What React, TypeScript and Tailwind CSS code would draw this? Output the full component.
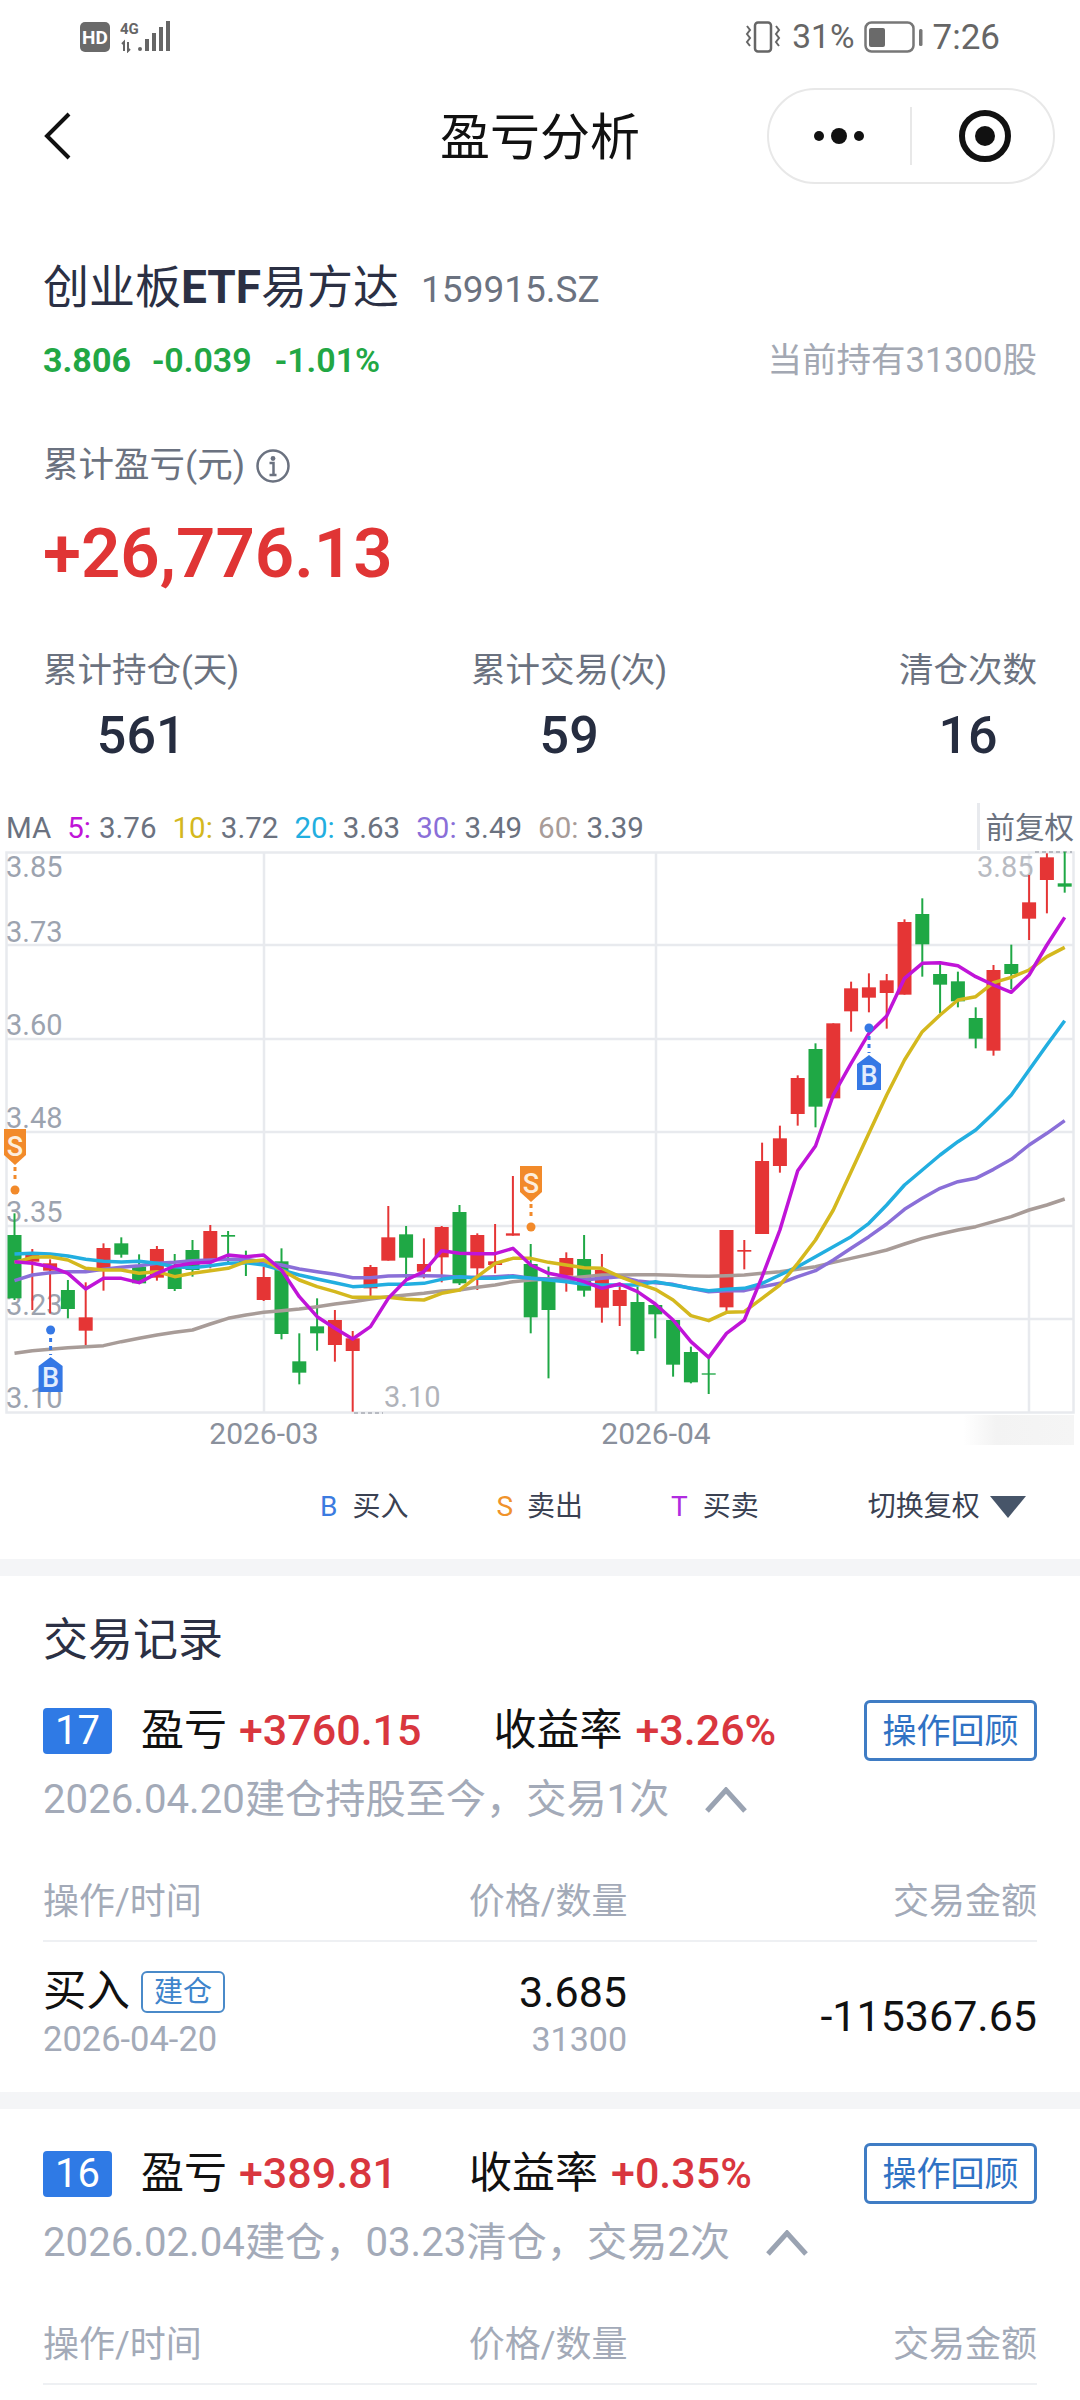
// 盈亏分析 page: header, k-line chart and trade records

// [isRed, bodyTop, bodyBottom, wickTop, wickBottom], y values relative to chart row (see toY)
const candles: [number, number, number, number, number][] = [
  [0, 405, 595, 340, 600], [1, 465, 485, 447, 630], [1, 490, 512, 478, 640], [0, 570, 627, 540, 655],
  [1, 652, 692, 547, 738], [1, 444, 505, 430, 572], [0, 430, 464, 412, 473], [0, 500, 550, 463, 552],
  [1, 447, 533, 438, 542], [0, 500, 567, 462, 573], [0, 450, 510, 420, 530], [1, 393, 480, 375, 505],
  [0, 405, 410, 393, 490], [0, 480, 486, 452, 528], [1, 531, 600, 500, 603], [0, 484, 702, 445, 718],
  [0, 784, 818, 700, 853], [0, 679, 700, 595, 752], [1, 660, 735, 630, 785], [1, 715, 753, 693, 935],
  [1, 501, 565, 495, 590], [1, 412, 482, 318, 482], [0, 403, 473, 378, 540], [1, 492, 515, 415, 535],
  [1, 381, 472, 378, 547], [0, 336, 550, 315, 555], [1, 405, 505, 400, 570], [1, 484, 495, 372, 520],
  [1, 400, 407, 228, 407], [0, 492, 652, 432, 700], [0, 540, 630, 500, 835], [1, 474, 527, 457, 575],
  [0, 477, 572, 405, 590], [1, 510, 623, 462, 668], [1, 570, 618, 548, 678], [0, 606, 753, 560, 763],
  [0, 615, 643, 615, 715], [0, 660, 794, 660, 830], [0, 756, 847, 740, 850], [0, 820, 824, 770, 882],
  [1, 390, 622, 390, 635], [1, 450, 455, 420, 508], [1, 183, 402, 128, 402], [1, 115, 198, 77, 218],
  [1, -66, 42, -74, 77], [0, -153, 20, -170, 82], [1, -230, -5, -230, -5], [1, -335, -266, -355, -205],
  [1, -338, -307, -380, -263], [1, -359, -321, -378, -214], [1, -534, -316, -542, -316], [0, -558, -467, -605, -370],
  [0, -378, -346, -410, -260], [0, -356, -296, -385, -278], [0, -246, -184, -278, -155], [1, -390, -148, -405, -133],
  [0, -408, -378, -466, -332], [1, -593, -544, -675, -480], [1, -728, -660, -740, -560], [0, -650, -640, -745, -622],
];

const ma5 = [485, 490, 500, 520, 567, 535, 535, 548, 520, 498, 490, 487, 465, 470, 465, 510, 590, 650, 685, 717, 680, 595, 540, 515, 452, 460, 461, 461, 445, 495, 520, 530, 545, 565, 552, 575, 612, 660, 725, 772, 700, 660, 530, 390, 212, 138, -15, -110, -200, -252, -365, -410, -412, -403, -370, -345, -323, -375, -465, -548];
const ma10 = [487, 472, 470, 480, 505, 510, 510, 520, 515, 530, 520, 512, 505, 485, 480, 510, 540, 560, 575, 592, 592, 592, 598, 600, 580, 570, 530, 490, 475, 475, 487, 495, 503, 505, 530, 550, 568, 600, 647, 662, 637, 635, 595, 555, 490, 420, 330, 215, 100, -15, -120, -205, -255, -300, -310, -352, -368, -390, -430, -458];
const ma20 = [462, 460, 462, 468, 478, 484, 486, 484, 490, 500, 503, 497, 490, 488, 495, 510, 525, 537, 548, 560, 557, 553, 553, 550, 538, 530, 535, 535, 530, 535, 540, 545, 553, 555, 555, 555, 545, 555, 565, 572, 568, 565, 550, 525, 500, 470, 440, 410, 370, 315, 255, 210, 165, 125, 90, 40, -15, -90, -165, -238];
const ma30 = [542, 525, 518, 515, 515, 508, 502, 497, 490, 487, 482, 480, 478, 478, 485, 495, 507, 515, 523, 533, 533, 528, 527, 527, 528, 532, 532, 530, 527, 535, 537, 537, 540, 535, 530, 543, 548, 553, 565, 575, 572, 572, 560, 550, 530, 512, 480, 445, 410, 372, 328, 295, 265, 245, 235, 208, 178, 135, 100, 62];
const ma60 = [760, 752, 748, 743, 740, 737, 725, 715, 705, 697, 690, 672, 655, 645, 637, 632, 627, 620, 612, 605, 597, 590, 585, 580, 573, 570, 562, 555, 545, 540, 537, 535, 530, 525, 525, 524, 524, 526, 528, 529, 527, 525, 520, 515, 508, 500, 487, 475, 463, 450, 432, 415, 402, 390, 380, 365, 350, 330, 315, 297];

const toX = (i: number) => 14.5 + 17.8 * i;
const toY = (p: number) => 1100 + p / 3;
const linePoints = (data: number[]) => data.map((p, i) => `${toX(i)},${toY(p)}`).join(' ');

function StatusBar() {
  return (
    <div className="h-[74px] flex items-center justify-between pl-[80px] pr-[80px] text-[#666666]">
      <div className="flex items-center">
        <div className="w-[30px] h-[30px] bg-[#6a6a6a] rounded-[5px] flex items-center justify-center text-white text-[19px] font-bold leading-none">HD</div>
        <svg width="52" height="32" viewBox="0 0 52 32" className="ml-[10px]">
          <text x="0" y="13" fontSize="15" fontWeight="700" fill="#666666">4G</text>
          <path d="M2 23l2-2v9M8 21v9l2-2M4 30" fill="none" stroke="#666666" strokeWidth="2" />
          <circle cx="20" cy="28" r="2" fill="#666666" />
          <path d="M27 18v12M34 12v18M41 6v24M48 0v30" stroke="#666666" strokeWidth="4" />
        </svg>
      </div>
      <div className="flex items-center">
        <svg width="38" height="32" viewBox="0 0 38 32">
          <rect x="11" y="1.5" width="16" height="29" rx="3" fill="none" stroke="#666666" strokeWidth="2.5" />
          <path d="M3 5l3 4-3 4 3 4-3 4 3 4M32 5l3 4-3 4 3 4-3 4 3 4" fill="none" stroke="#666666" strokeWidth="2" />
        </svg>
        <span className="ml-[10px] text-[33.5px] leading-none">31%</span>
        <svg width="59" height="32" viewBox="0 0 59 32" className="ml-[9px]">
          <rect x="1.5" y="1.5" width="48" height="29" rx="6" fill="none" stroke="#777777" strokeWidth="2.5" />
          <rect x="5" y="7" width="16" height="19" rx="2" fill="#6a6a6a" />
          <rect x="55" y="8" width="3.5" height="17" rx="1.5" fill="#777777" />
        </svg>
        <span className="ml-[10px] text-[35px] leading-none">7:26</span>
      </div>
    </div>
  );
}

function NavBar() {
  return (
    <div className="relative h-[128px] flex items-center justify-center">
      <svg width="30" height="50" viewBox="0 0 30 50" className="absolute left-[43px] top-[37px]">
        <path d="M26 3 L4 25 L26 47" fill="none" stroke="#111111" strokeWidth="4" />
      </svg>
      <span className="text-[50px] leading-none text-[#111111]">盈亏分析</span>
      <div className="absolute left-[767px] top-[14px] w-[288px] h-[96px] rounded-[48px] border-[2px] border-[#e8e8e8] flex items-center">
        <svg width="60" height="24" viewBox="0 0 60 24" className="ml-[40px]">
          <circle cx="10" cy="12" r="5" fill="#111111" />
          <circle cx="30" cy="12" r="8" fill="#111111" />
          <circle cx="50" cy="12" r="5" fill="#111111" />
        </svg>
        <div className="ml-[41px] w-[2px] h-[58px] bg-[#e8e8e8]" />
        <svg width="54" height="54" viewBox="0 0 54 54" className="ml-[46px]">
          <circle cx="27" cy="27" r="23" fill="none" stroke="#111111" strokeWidth="6" />
          <circle cx="27" cy="27" r="10" fill="#111111" />
        </svg>
      </div>
    </div>
  );
}

function Summary() {
  return (
    <div className="px-[43px]">
      <div className="mt-[57px] h-[56px] flex items-center">
        <span className="text-[46px] leading-none text-[#2b3044]">创业板<span className="font-bold">ETF</span>易方达</span>
        <span className="ml-[22px] text-[37px] leading-none text-[#6b7280] mt-[4px]">159915.SZ</span>
      </div>
      <div className="mt-[17px] h-[56px] flex items-center justify-between">
        <div className="flex items-center text-[34px] leading-none font-semibold text-[#22a744]">
          <span className="font-bold">3.806</span>
          <span className="ml-[21px]">-0.039</span>
          <span className="ml-[23px]">-1.01%</span>
        </div>
        <span className="text-[34.5px] leading-none text-[#a3a8b3]">当前持有31300股</span>
      </div>
      <div className="mt-[50px] h-[56px] flex items-center text-[#6b7280]">
        <span className="text-[35.5px] leading-none">累计盈亏(元)</span>
        <svg width="36" height="36" viewBox="0 0 36 36" className="ml-[10px]">
          <circle cx="18" cy="18" r="15.5" fill="none" stroke="#6b7280" strokeWidth="2.5" />
          <circle cx="18" cy="10.5" r="2.4" fill="#6b7280" />
          <path d="M14.5 15h4v12M14.5 27h7" fill="none" stroke="#6b7280" strokeWidth="2.5" />
        </svg>
      </div>
      <div className="mt-[31px] h-[56px] flex items-center text-[69px] leading-none font-semibold text-[#e03535]">+26,776.13</div>
      <div className="mt-[61px] flex justify-between">
        <Stat label="累计持仓(天)" value="561" />
        <Stat label="累计交易(次)" value="59" />
        <Stat label="清仓次数" value="16" />
      </div>
    </div>
  );
}

function Stat({ label, value }: { label: string; value: string }) {
  return (
    <div className="flex flex-col items-center">
      <div className="h-[56px] flex items-center text-[34.5px] leading-none text-[#6b7280]">{label}</div>
      <div className="mt-[10px] h-[56px] flex items-center text-[52px] leading-none font-medium text-[#262d40]">{value}</div>
    </div>
  );
}

function MaRow() {
  return (
    <div className="mt-[38px] h-[48px] flex items-center pt-[5px] pl-[6px] pr-[6px] text-[29.5px] leading-none text-[#6b7280] whitespace-nowrap">
      <span>MA</span>
      <span className="ml-[16px] text-[#c014d8]">5:</span><span className="ml-[8px]">3.76</span>
      <span className="ml-[16px] text-[#d4b81e]">10:</span><span className="ml-[8px]">3.72</span>
      <span className="ml-[16px] text-[#22aee0]">20:</span><span className="ml-[8px]">3.63</span>
      <span className="ml-[16px] text-[#8a6fd8]">30:</span><span className="ml-[8px]">3.49</span>
      <span className="ml-[16px] text-[#a89c98]">60:</span><span className="ml-[8px]">3.39</span>
      <span className="ml-auto self-end h-[47px] pt-[5px] border-l-[3px] border-[#e8eaee] pl-[5px] flex items-center">前复权</span>
    </div>
  );
}

function BuyMark({ x, top }: { x: number; top: number }) {
  return (
    <g>
      <circle cx={x} cy={top - 27} r="4.5" fill="#3578e5" />
      <path d={`M${x} ${top - 19}V${top - 2}`} stroke="#3578e5" strokeWidth="3" strokeDasharray="4 4" />
      <path d={`M${x} ${top}L${x + 12} ${top + 9}V${top + 35}H${x - 12}V${top + 9}Z`} fill="#3578e5" />
      <text x={x} y={top + 30} textAnchor="middle" fontSize="27" fontWeight="500" fill="#e3edfd">B</text>
    </g>
  );
}

function SellMark({ x, top }: { x: number; top: number }) {
  return (
    <g>
      <path d={`M${x - 11} ${top}H${x + 11}V${top + 26}L${x} ${top + 36}L${x - 11} ${top + 26}Z`} fill="#f28a2a" />
      <text x={x} y={top + 27} textAnchor="middle" fontSize="27" fontWeight="500" fill="#fdeedd">S</text>
      <path d={`M${x} ${top + 38}V${top + 54}`} stroke="#f28a2a" strokeWidth="3" strokeDasharray="4 4" />
      <circle cx={x} cy={top + 61} r="4.5" fill="#f28a2a" />
    </g>
  );
}

function Chart() {
  const gridY = [945, 1039, 1132, 1226, 1319];
  const gridX = [264, 656, 1029];
  const labels: [string, number][] = [['3.85', 877], ['3.73', 942], ['3.60', 1035], ['3.48', 1128], ['3.35', 1222], ['3.23', 1315], ['3.10', 1408]];
  return (
    <svg width="1080" height="600" viewBox="0 850 1080 600" className="block">
      <defs>
        <linearGradient id="smudge" x1="0" x2="1" y1="0" y2="0">
          <stop offset="0" stopColor="#f3f3f3" stopOpacity="0" />
          <stop offset="0.3" stopColor="#f3f3f3" />
          <stop offset="1" stopColor="#f5f5f5" />
        </linearGradient>
      </defs>
      <rect x="963" y="1415" width="111" height="30" fill="url(#smudge)" />
      <rect x="6.5" y="852.5" width="1067" height="560" fill="none" stroke="#e8eaee" strokeWidth="2.5" />
      {gridY.map((y) => <path key={y} d={`M6 ${y}H1074`} stroke="#e8eaee" strokeWidth="2.5" />)}
      {gridX.map((x) => <path key={x} d={`M${x} 852V1413`} stroke="#e8eaee" strokeWidth="2.5" />)}
      {labels.map(([t, y]) => <text key={t} x="6" y={y} fontSize="29" fill="#9ca3af">{t}</text>)}
      <text x="977" y="877" fontSize="29" fill="#b8bbc2">3.85</text>
      <path d="M1035 852H1072" stroke="#b8bbc2" strokeWidth="2" strokeDasharray="4 3" />
      <text x="384" y="1407" fontSize="29" fill="#b0b3ba">3.10</text>
      <path d="M354 1413H383" stroke="#b8bbc2" strokeWidth="2" strokeDasharray="4 3" />
      {candles.map(([red, bTop, bBot, wTop, wBot], i) => {
        const color = red ? '#e53535' : '#1fa845';
        return (
          <g key={i}>
            <path d={`M${toX(i)} ${toY(wTop)}V${toY(wBot)}`} stroke={color} strokeWidth="2" />
            <rect x={toX(i) - 7} y={toY(bTop)} width="14" height={(bBot - bTop) / 3} fill={color} />
          </g>
        );
      })}
      <polyline points={linePoints(ma60)} fill="none" stroke="#a89c98" strokeWidth="3.5" strokeLinejoin="round" />
      <polyline points={linePoints(ma30)} fill="none" stroke="#8a6fd8" strokeWidth="3.5" strokeLinejoin="round" />
      <polyline points={linePoints(ma20)} fill="none" stroke="#22aee0" strokeWidth="3.5" strokeLinejoin="round" />
      <polyline points={linePoints(ma10)} fill="none" stroke="#d4b81e" strokeWidth="3.5" strokeLinejoin="round" />
      <polyline points={linePoints(ma5)} fill="none" stroke="#c014d8" strokeWidth="3.5" strokeLinejoin="round" />
      <SellMark x={15} top={1129} />
      <SellMark x={531} top={1166} />
      <BuyMark x={50.6} top={1357} />
      <BuyMark x={869} top={1055} />
      <text x="264" y="1444" textAnchor="middle" fontSize="30" fill="#8a909c">2026-03</text>
      <text x="656" y="1444" textAnchor="middle" fontSize="30" fill="#8a909c">2026-04</text>
    </svg>
  );
}

function Legend() {
  return (
    <div className="mt-[29px] h-[56px] flex items-center pl-[320px] text-[28px] leading-none text-[#3a4152]">
      <span className="text-[#3b7be0]">B</span><span className="ml-[15px]">买入</span>
      <span className="ml-[88px] text-[#f0932b]">S</span><span className="ml-[14px]">卖出</span>
      <span className="ml-[88px] text-[#b02ce0]">T</span><span className="ml-[15px]">买卖</span>
      <span className="ml-[109px]">切换复权</span>
      <svg width="38" height="24" viewBox="0 0 38 24" className="ml-[9px]">
        <path d="M1 1H37L19 23Z" fill="#475569" />
      </svg>
    </div>
  );
}

type TradeHeadProps = { no: string; profit: string; rate: string; desc: string };

function TradeHead({ no, profit, rate, desc }: TradeHeadProps) {
  return (
    <>
      <div className="h-[61px] flex items-center">
        <div className="w-[69px] h-[46px] rounded-[4px] bg-[#2f7ae5] flex items-center justify-center text-[40px] leading-none text-white">{no}</div>
        <span className="ml-[29px] text-[43px] leading-none text-[#111111]">盈亏</span>
        <span className="ml-[12px] text-[43px] leading-none font-medium text-[#d9363e]">{profit}</span>
        <span className="ml-[72px] text-[43px] leading-none text-[#111111]">收益率</span>
        <span className="ml-[13px] text-[43px] leading-none font-medium text-[#d9363e]">{rate}</span>
        <div className="ml-auto w-[173px] h-[61px] rounded-[6px] border-[3px] border-[#3f7cc4] flex items-center justify-center text-[34px] leading-none text-[#2f72c4]">操作回顾</div>
      </div>
      <div className="mt-[11px] h-[56px] flex items-center text-[40.2px] leading-none text-[#a3aab8]">
        <span>{desc}</span>
        <svg width="42" height="26" viewBox="0 0 42 26" className="ml-[36px]">
          <path d="M2 24 L21 3 L40 24" fill="none" stroke="#9aa3b2" strokeWidth="5" />
        </svg>
      </div>
      <div className="mt-[46px] h-[56px] flex items-center justify-between text-[36px] leading-none text-[#a3aab8]">
        <span className="w-[400px]">操作/时间</span>
        <span className="w-[184px] text-right">价格/数量</span>
        <span className="w-[409px] text-right">交易金额</span>
      </div>
      <div className="mt-[10px] h-[2px] bg-[#eef0f3]" />
    </>
  );
}

function TradeRow() {
  return (
    <div className="mt-[25px] flex">
      <div className="w-[400px]">
        <div className="h-[50px] flex items-center">
          <span className="text-[43.5px] leading-none text-[#111111]">买入</span>
          <span className="ml-[11px] w-[84px] h-[42px] rounded-[6px] border-[2px] border-[#4a8ac9] flex items-center justify-center text-[29px] leading-none text-[#3f85cc]">建仓</span>
        </div>
        <div className="mt-[2px] text-[34.5px] leading-[40px] text-[#a3aab8]">2026-04-20</div>
      </div>
      <div className="w-[184px] text-right">
        <div className="h-[50px] flex items-center justify-end text-[43px] leading-none text-[#111111]">3.685</div>
        <div className="mt-[2px] text-[34px] leading-[40px] text-[#a3aab8]">31300</div>
      </div>
      <div className="flex-1 h-[98px] flex items-center justify-end text-[43px] leading-none text-[#111111]">-115367.65</div>
    </div>
  );
}

export default function App() {
  return (
    <div className="w-[1080px] h-[2400px] overflow-hidden bg-white font-['Roboto','Noto_Sans_CJK_SC',sans-serif]">
      <StatusBar />
      <NavBar />
      <Summary />
      <MaRow />
      <Chart />
      <Legend />
      <div className="mt-[24px] h-[17px] bg-[#f4f5f7]" />
      <div className="px-[43px]">
        <div className="mt-[36px] h-[56px] flex items-center text-[45px] leading-none text-[#2b3044]">交易记录</div>
        <div className="mt-[32px]">
          <TradeHead no="17" profit="+3760.15" rate="+3.26%" desc="2026.04.20建仓持股至今，交易1次" />
          <TradeRow />
        </div>
      </div>
      <div className="mt-[27px] h-[17px] bg-[#f4f5f7]" />
      <div className="px-[43px] pt-[34px]">
        <TradeHead no="16" profit="+389.81" rate="+0.35%" desc="2026.02.04建仓，03.23清仓，交易2次" />
      </div>
    </div>
  );
}
